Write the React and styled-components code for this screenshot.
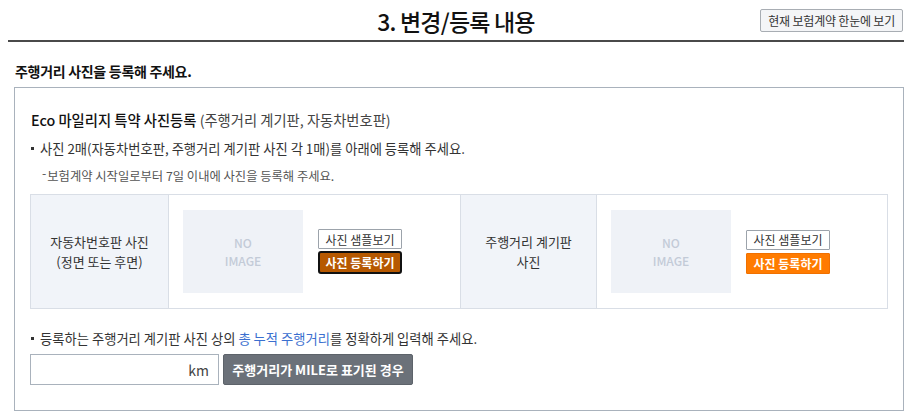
import styled, { createGlobalStyle } from 'styled-components';

const GlobalStyle = createGlobalStyle`
    body {
        margin: 0;
        background: #fff;
        font-family: "Noto Sans CJK KR", "Noto Sans", sans-serif;
        color: #222;
    }
`

const Page = styled.div`
    width: 896px;
    padding: 0 8px;
`

const Header = styled.div`
    display: grid;
    grid-template-columns: 1fr auto 1fr;
    align-items: center;
    height: 40px;
    border-bottom: 2px solid #4a4a4a;
`

const Title = styled.h2`
    grid-column: 2;
    margin: 0;
    font-size: 23px;
    font-weight: 500;
    letter-spacing: -0.8px;
    color: #111;
    padding-top: 1px;
`

const SummaryButton = styled.button`
    justify-self: end;
    margin-right: 1px;
    height: 23px;
    padding: 0 7px;
    font-family: inherit;
    font-size: 12px;
    color: #333;
    background: #f4f5f7;
    border: 1px solid #a8adb3;
    border-radius: 2px;
    letter-spacing: -0.2px;
    margin-top: 0;
`

const Section = styled.div`
    padding-left: 6px;
`

const SectionTitle = styled.h3`
    margin: 19px 0 0 1px;
    font-size: 14px;
    font-weight: 700;
    line-height: 20px;
    color: #111;
    letter-spacing: -0.3px;
`

const Box = styled.div`
    margin-top: 6px;
    border: 1px solid #a9b2bc;
    padding: 22px 15px 25px 15px;
`

const BoxTitle = styled.div`
    font-size: 14.3px;
    line-height: 20px;
    color: #111;
    padding-left: 1px;

    strong {
        font-weight: 500;
    }

    span {
        color: #444;
    }
`

const Bullet = styled.p`
    position: relative;
    margin: ${p => p.$top}px 0 0;
    padding-left: 10px;
    font-size: 13.3px;
    line-height: 18px;
    color: #333;

    &::before {
        content: "";
        position: absolute;
        left: 1px;
        top: 7px;
        width: 3px;
        height: 3px;
        background: #333;
    }

    em {
        font-style: normal;
        color: #3b6fcf;
    }
`

const Note = styled.p`
    margin: 10px 0 0 12px;
    font-size: 12.3px;
    line-height: 16px;
    color: #555;

    &::before {
        content: "-";
        position: relative;
        top: -3px;
        margin-right: 1px;
    }
`

const PhotoTable = styled.div`
    display: grid;
    grid-template-columns: 138px 291px 137px 1fr;
    height: 113px;
    margin-top: 10px;
    border: 1px solid #d9dee6;
`

const HeadCell = styled.div`
    display: flex;
    align-items: center;
    justify-content: center;
    text-align: center;
    background: #f1f4f9;
    font-size: 13px;
    line-height: 20px;
    color: #333;
    border-right: 1px solid #d9dee6;
    border-left: ${p => p.$divider ? '1px solid #d9dee6' : 'none'};
`

const BodyCell = styled.div`
    display: flex;
    align-items: center;
    gap: 15px;
    padding-left: 14px;
`

const NoImage = styled.div`
    width: 120px;
    height: 83px;
    display: flex;
    flex-direction: column;
    align-items: center;
    justify-content: center;
    background: #eff2f7;
    color: #c3cbd7;
    font-size: 12px;
    font-weight: 500;
    line-height: 18px;
`

const ButtonStack = styled.div`
    display: flex;
    flex-direction: column;
    gap: 3px;
    width: 84px;
`

const SampleButton = styled.button`
    height: 20px;
    padding: 0;
    font-family: inherit;
    font-size: 12px;
    color: #333;
    background: #fff;
    border: 1px solid #9ca3ab;
    border-radius: 1px;
`

const UploadButton = styled.button`
    height: ${p => p.$focused ? 23 : 21}px;
    padding: 0;
    font-family: inherit;
    font-size: 12px;
    font-weight: 700;
    color: #fff;
    background: ${p => p.$focused ? '#b65800' : '#ff7b00'};
    border: ${p => p.$focused ? '2px solid #111' : '1px solid #f07000'};
    border-radius: ${p => p.$focused ? 3 : 1}px;
    margin-top: ${p => p.$focused ? -1 : 0}px;
`

const MileageRow = styled.div`
    display: flex;
    gap: 4px;
    margin-top: 6px;
`

const KmInput = styled.label`
    display: flex;
    align-items: center;
    justify-content: flex-end;
    width: 189px;
    height: 31px;
    box-sizing: border-box;
    padding-right: 9px;
    border: 1px solid #a9b2bc;
    font-size: 14px;
    color: #444;
`

const MileButton = styled.button`
    width: 190px;
    height: 31px;
    font-family: inherit;
    font-size: 13px;
    font-weight: 700;
    color: #fff;
    background: #6b7179;
    border: 1px solid #5d636a;
    border-radius: 2px;
`

function PhotoCell({ focused }) {
    return (
        <BodyCell>
            <NoImage>
                <span>NO</span>
                <span>IMAGE</span>
            </NoImage>
            <ButtonStack>
                <SampleButton>사진 샘플보기</SampleButton>
                <UploadButton $focused={focused}>사진 등록하기</UploadButton>
            </ButtonStack>
        </BodyCell>
    )
}

export default function App() {
    return (
        <Page>
            <GlobalStyle />
            <Header>
                <Title>3. 변경/등록 내용</Title>
                <SummaryButton>현재 보험계약 한눈에 보기</SummaryButton>
            </Header>
            <Section>
                <SectionTitle>주행거리 사진을 등록해 주세요.</SectionTitle>
                <Box>
                    <BoxTitle>
                        <strong>Eco 마일리지 특약 사진등록</strong> <span>(주행거리 계기판, 자동차번호판)</span>
                    </BoxTitle>
                    <Bullet $top={10}>사진 2매(자동차번호판, 주행거리 계기판 사진 각 1매)를 아래에 등록해 주세요.</Bullet>
                    <Note>보험계약 시작일로부터 7일 이내에 사진을 등록해 주세요.</Note>
                    <PhotoTable>
                        <HeadCell>자동차번호판 사진<br />(정면 또는 후면)</HeadCell>
                        <PhotoCell focused />
                        <HeadCell $divider>주행거리 계기판<br />사진</HeadCell>
                        <PhotoCell />
                    </PhotoTable>
                    <Bullet $top={21}>
                        등록하는 주행거리 계기판 사진 상의 <em>총 누적 주행거리</em>를 정확하게 입력해 주세요.
                    </Bullet>
                    <MileageRow>
                        <KmInput>km</KmInput>
                        <MileButton>주행거리가 MILE로 표기된 경우</MileButton>
                    </MileageRow>
                </Box>
            </Section>
        </Page>
    )
}
